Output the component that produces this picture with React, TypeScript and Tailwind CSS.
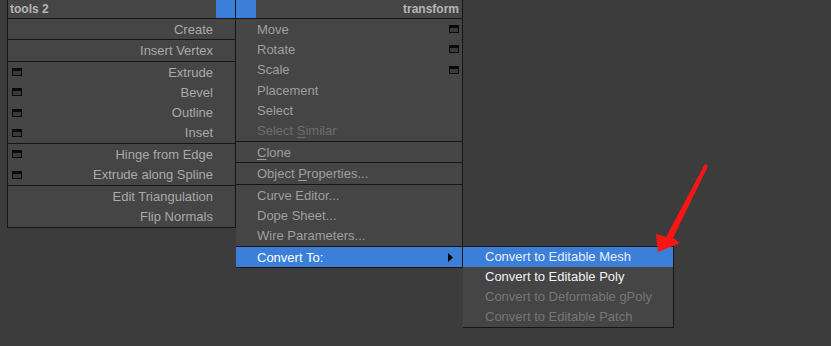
import React from "react";

const Icon = () => (
  <span className="block w-[10px] h-[8px] border border-[#0a0a0a] border-t-[3px] bg-[#3a3a3a]" />
);

type LRow = { t: string; icon?: boolean };

const LeftGroup = ({ rows, h }: { rows: LRow[]; h: number }) => (
  <div className="flex flex-col border-b border-[#161616]" style={{ height: h + 1 }}>
    {rows.map((r) => (
      <div key={r.t} className="flex-1 flex items-center pl-[4px] pr-[22px] text-[13px] text-[#a9a9a9]">
        {r.icon ? <Icon /> : null}
        <span className="ml-auto leading-none">{r.t}</span>
      </div>
    ))}
  </div>
);

type CRow = { t: React.ReactNode; icon?: boolean; dis?: boolean };

const CenterGroup = ({ rows, h }: { rows: CRow[]; h: number }) => (
  <div className="flex flex-col border-b border-[#161616]" style={{ height: h + 1 }}>
    {rows.map((r, i) => (
      <div
        key={i}
        className={
          "flex-1 flex items-center pl-[21px] pr-[3px] text-[13px] " +
          (r.dis ? "text-[#6d6d6d]" : "text-[#9f9f9f]")
        }
      >
        <span className="leading-none">{r.t}</span>
        {r.icon ? (
          <span className="ml-auto">
            <Icon />
          </span>
        ) : null}
      </div>
    ))}
  </div>
);

export default function App() {
  return (
    <div className="relative w-[831px] h-[346px] overflow-hidden bg-[#3c3c3c] font-['Liberation_Sans',Arial,sans-serif]">
      <div className="flex items-start pl-[7px]">
        {/* left panel */}
        <div className="w-[229px] bg-[#454545] border-l border-r border-[#161616]">
          <div className="h-[19px] flex items-stretch border-b border-[#161616]">
            <span className="flex-1 pl-[2px] text-[12px] font-bold text-[#b5b5b5] flex items-center">tools 2</span>
            <span className="w-[19px] bg-[#3c7fd9]" />
          </div>
          <LeftGroup h={20} rows={[{ t: "Create" }]} />
          <LeftGroup h={21} rows={[{ t: "Insert Vertex" }]} />
          <LeftGroup
            h={81}
            rows={[
              { t: "Extrude", icon: true },
              { t: "Bevel", icon: true },
              { t: "Outline", icon: true },
              { t: "Inset", icon: true },
            ]}
          />
          <LeftGroup
            h={41}
            rows={[
              { t: "Hinge from Edge", icon: true },
              { t: "Extrude along Spline", icon: true },
            ]}
          />
          <LeftGroup h={41} rows={[{ t: "Edit Triangulation" }, { t: "Flip Normals" }]} />
        </div>

        {/* center panel */}
        <div className="w-[227px] bg-[#454545] border-r border-[#161616]">
          <div className="h-[19px] flex items-stretch border-b border-[#161616]">
            <span className="w-[20px] bg-[#3c7fd9]" />
            <span className="flex-1 pr-[3px] text-[12px] font-bold text-[#b5b5b5] flex items-center justify-end">
              transform
            </span>
          </div>
          <CenterGroup
            h={122}
            rows={[
              { t: "Move", icon: true },
              { t: "Rotate", icon: true },
              { t: "Scale", icon: true },
              { t: "Placement" },
              { t: "Select" },
              {
                t: (
                  <>
                    Select <u className="underline-offset-2">S</u>imilar
                  </>
                ),
                dis: true,
              },
            ]}
          />
          <CenterGroup
            h={20}
            rows={[
              {
                t: (
                  <>
                    <u className="underline-offset-2">C</u>lone
                  </>
                ),
              },
            ]}
          />
          <CenterGroup
            h={21}
            rows={[
              {
                t: (
                  <>
                    Object <u className="underline-offset-2">P</u>roperties...
                  </>
                ),
              },
            ]}
          />
          <CenterGroup
            h={61}
            rows={[{ t: "Curve Editor..." }, { t: "Dope Sheet..." }, { t: "Wire Parameters..." }]}
          />
          <div className="h-[21px] flex flex-col border-b border-[#161616]">
            <div className="flex-1 flex items-center pl-[21px] pr-[9px] text-[13px] text-white bg-[#3c7fd9]">
              <span className="leading-none">Convert To:</span>
              <svg className="ml-auto" width="5" height="9" viewBox="0 0 5 9">
                <polygon points="0,0 5,4.5 0,9" fill="#050505" />
              </svg>
            </div>
          </div>
        </div>

        {/* submenu */}
        <div className="mt-[246px] w-[211px] bg-[#454545] border-t border-r border-b border-[#161616] flex flex-col">
          <div className="h-[20px] flex items-center pl-[22px] text-[13px] text-[#e6eefa] bg-[#3c7fd9]">
            Convert to Editable Mesh
          </div>
          <div className="h-[20px] flex items-center pl-[22px] text-[13px] text-[#f2f2f2]">
            Convert to Editable Poly
          </div>
          <div className="h-[20px] flex items-center pl-[22px] text-[13px] text-[#767676]">
            Convert to Deformable gPoly
          </div>
          <div className="h-[20px] flex items-center pl-[22px] text-[13px] text-[#767676]">
            Convert to Editable Patch
          </div>
        </div>
      </div>

      {/* red annotation arrow */}
      <svg className="absolute left-0 top-0 pointer-events-none" width="831" height="346" viewBox="0 0 831 346">
        <polygon
          points="705,164 708,166 673,238 680,243 658,252 656,234 666,237"
          fill="#ff1414"
        />
      </svg>
    </div>
  );
}
